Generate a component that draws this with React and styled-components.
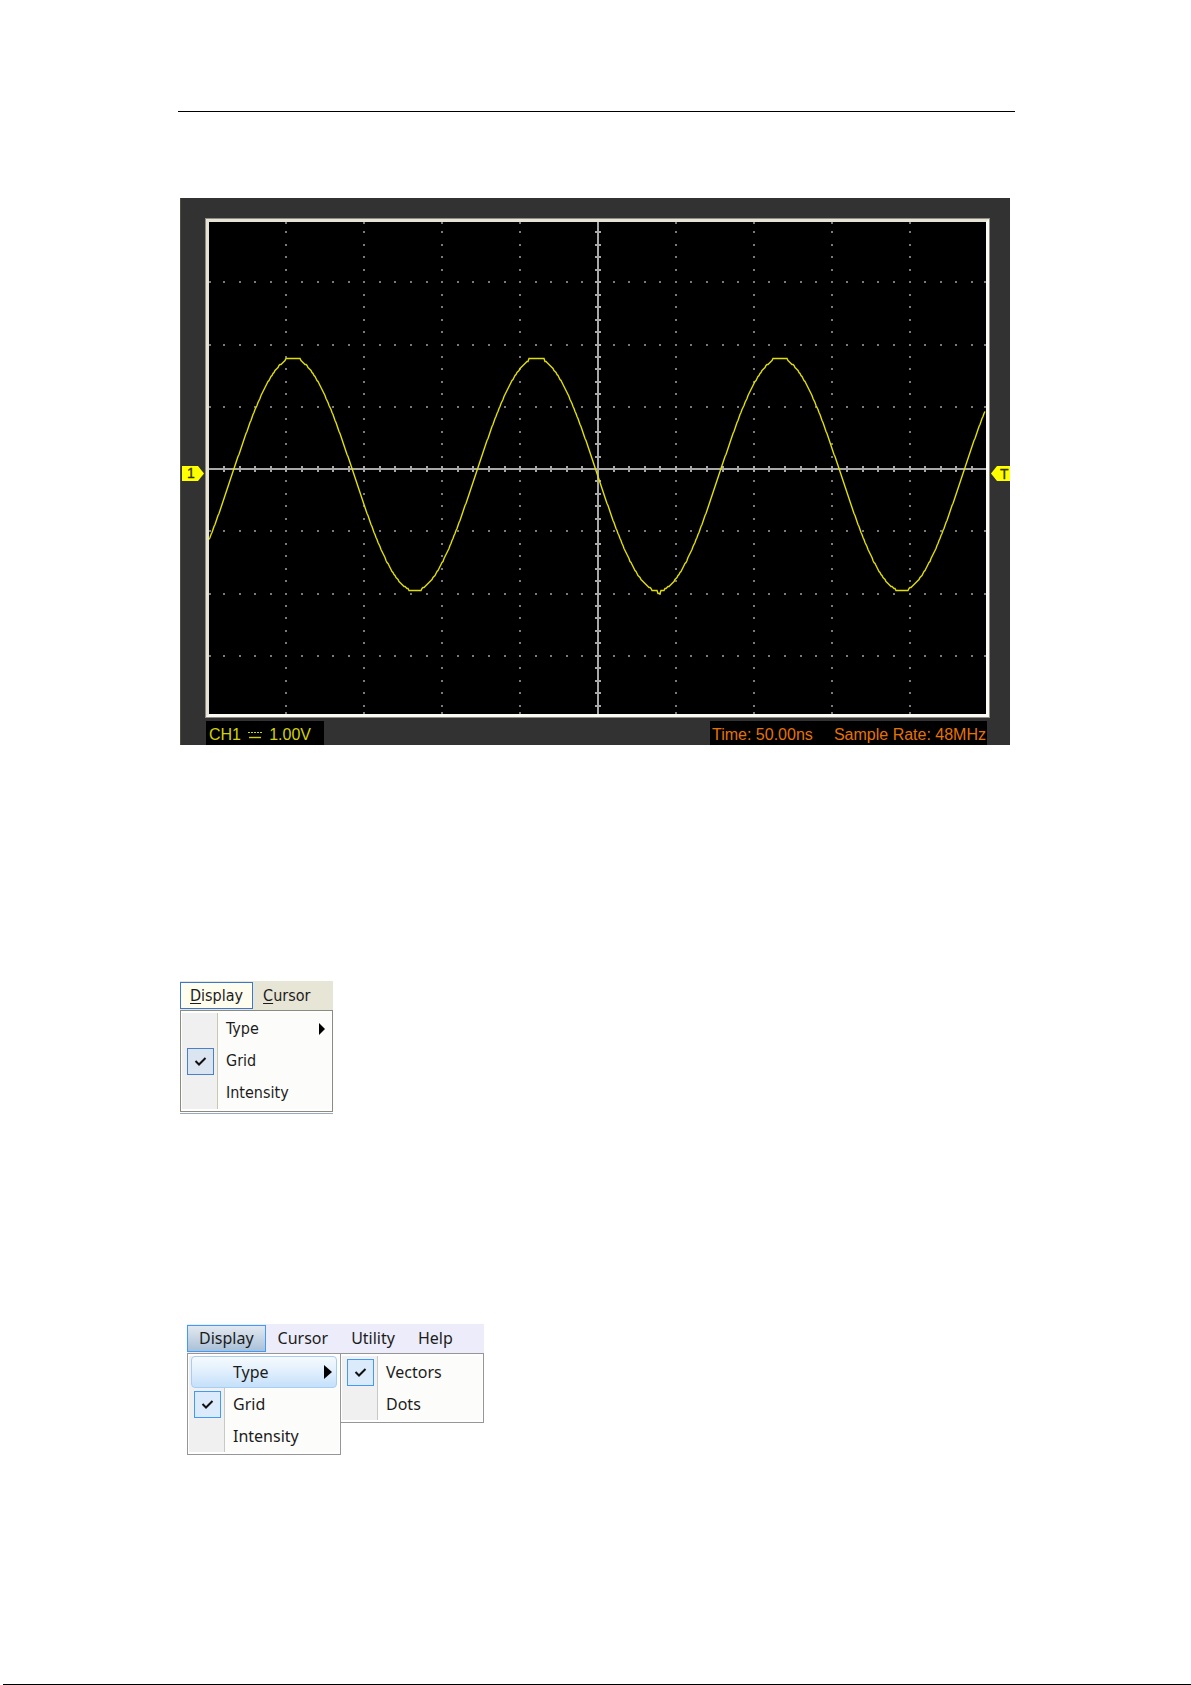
import React from 'react';
import styled, { createGlobalStyle, css } from 'styled-components';

const GlobalStyle = createGlobalStyle`
* {
  box-sizing: border-box;
}
body {
  margin: 0;
  background: #ffffff;
}
`;

const Page = styled.div`
display: flex;
flex-direction: column;
align-items: stretch;
min-height: 100vh;
`;

const Content = styled.main`
padding: 111px 176px 40px 178px;
`;

const Rule = styled.hr`
height: 1px;
margin: 0;
border: none;
background: #000000;
`;

const PageEdge = styled.div`
height: 1px;
margin-top: auto;
margin-left: 3px;
background: #000000;
`;

/* oscilloscope */

const Scope = styled.section`
display: grid;
grid-template-columns: 24px 1fr 20px;
margin: 86px 5px 0 2px;
padding-top: 20px;
background: #323232;
border-left: 1px solid #4a4d40;
`;

const Side = styled.div`
display: flex;
align-items: center;
justify-content: ${({ $end }) => ($end ? 'flex-end' : 'center')};
padding-top: 10px;
`;

const Frame = styled.div`
border: 4px solid;
border-color: #e6e2d6 #fbfaf6 #fbfaf6 #e6e2d6;
outline: 1px solid #8f8d84;
outline-offset: -1px;
background: #000000;
`;

const Plot = styled.svg`
display: block;
width: 100%;
height: auto;
`;

const MarkerText = styled.text`
font-family: "Liberation Sans", Arial, sans-serif;
font-size: 14px;
fill: #333300;
stroke: #333300;
stroke-width: 0.3px;
`;

const StatusBar = styled.div`
grid-column: 2;
display: flex;
justify-content: space-between;
padding: 3px 3px 0 1px;
`;

const Status = styled.div`
display: flex;
align-items: center;
justify-content: space-between;
width: ${({ $width }) => $width};
height: 24px;
padding: ${({ $pad }) => $pad};
background: #000000;
font-family: "Liberation Sans", Arial, sans-serif;
font-size: 16px;
line-height: 20px;
white-space: nowrap;
color: ${({ $color }) => $color};
`;

const WIDTH = 777;
const HEIGHT = 492;
const CENTER_X = 388;
const CENTER_Y = 247;
const STEP_X = 15.58;
const STEP_Y = 12.45;

const columns = Array.from({ length: 51 }, (_, i) => i - 25);
const rows = Array.from({ length: 41 }, (_, i) => i - 20);

const xAt = (i) => Math.min(WIDTH - 2, Math.max(0, Math.round(CENTER_X + i * STEP_X)));
const yAt = (i) => Math.min(HEIGHT - 1, Math.max(1, Math.round(CENTER_Y + i * STEP_Y)));

// dots run along every fifth row and every fifth column, the outer columns and rows stay empty
const hasDot = (c, r) => {
    if (c === 0 || r === 0) return false;
    const onColumn = c % 5 === 0 && Math.abs(c) < 25;
    const onRow = r % 5 === 0 && Math.abs(r) < 20;
    return onColumn || onRow;
};

const PERIOD = 243.5;
const FIRST_PEAK = 84;
const GLITCH_X = 450;

// the sampled signal goes flat for a few pixels round every peak
const waveY = (x) => {
    if (Math.abs(x - GLITCH_X) < 2) return 371;
    const phase = ((x - FIRST_PEAK) / PERIOD) * 2 * Math.PI;
    const c = Math.cos(phase);
    if (c > 0.98) return 136;
    if (c < -0.985) return 368;
    return Math.round(252 - 116 * c);
};

const wave = Array.from({ length: WIDTH }, (_, x) => `${x},${waveY(x) + 0.5}`).join(' ');

const Graticule = () => (
    <g shapeRendering="crispEdges">
        <g fill="#7a7a7a">
            {columns.map((c) =>
                rows
                    .filter((r) => hasDot(c, r))
                    .map((r) => <rect key={`${c}/${r}`} x={xAt(c)} y={yAt(r) - 1} width="2" height="2" />)
            )}
        </g>
        <g fill="#a8a8a8">
            <rect x="0" y={CENTER_Y - 1} width={WIDTH} height="2" />
            <rect x={CENTER_X} y="0" width="2" height={HEIGHT} />
            {columns.slice(1, -1).map((c) => (
                <rect key={c} x={xAt(c)} y={CENTER_Y - 3} width="2" height="6" />
            ))}
            {rows.slice(1, -1).map((r) => (
                <rect key={r} x={CENTER_X - 2} y={yAt(r) - 1} width="6" height="2" />
            ))}
        </g>
    </g>
);

const CouplingIcon = () => (
    <svg width="14" height="12" viewBox="0 0 14 12" fill="none" stroke="#d2d200" aria-hidden="true">
        <path d="M0 3.5h14" strokeDasharray="2 1" />
        <path d="M1 8.5h12" strokeWidth="1.4" />
    </svg>
);

const Oscilloscope = () => (
    <Scope>
        <Side>
            <svg width="22" height="15" viewBox="0 0 22 15">
                <path d="M0 0h16l6 7.5L16 15H0z" fill="#ffff00" />
                <MarkerText x="5" y="12">1</MarkerText>
            </svg>
        </Side>
        <Frame>
            <Plot viewBox={`0 0 ${WIDTH} ${HEIGHT}`} role="img" aria-label="CH1">
                <Graticule />
                <polyline points={wave} fill="none" stroke="#e0e000" strokeWidth="1.4" />
            </Plot>
        </Frame>
        <Side $end>
            <svg width="19" height="15" viewBox="0 0 19 15">
                <path d="M19 0H6L0 7.5 6 15h13z" fill="#ffff00" />
                <MarkerText x="9" y="13">T</MarkerText>
            </svg>
        </Side>
        <StatusBar>
            <Status $width="118px" $pad="4px 13px 0 3px" $color="#d2d200">
                <span>CH1</span>
                <CouplingIcon />
                <span>1.00V</span>
            </Status>
            <Status $width="277px" $pad="4px 1px 0 2px" $color="#e67300">
                <span>Time: 50.00ns</span>
                <span>Sample Rate: 48MHz</span>
            </Status>
        </StatusBar>
    </Scope>
);

/* menus */

const classic = css`
font-family: "DejaVu Sans Condensed", "DejaVu Sans", sans-serif;
--bar: #e6e5d6;
--active-border: #3b76cf;
--active-bg: #fffdee;
--menu-border: #8b8b80;
--separator: #c9c6b6;
--check-border: #4a80c8;
--check-bg: #dbe4f1;
`;

const aero = css`
font-family: "Noto Sans", "Open Sans", sans-serif;
--bar: #ececfa;
--active-border: #3f9bf5;
--active-bg: linear-gradient(#e3e9f0, #a9c0d8);
--menu-border: #969696;
--separator: #c8c8c8;
--check-border: #3f9bf5;
--check-bg: #dcebfb;
`;

const MenuBlock = styled.div`
width: ${({ $width }) => $width};
margin: ${({ $margin }) => $margin};
font-size: 16px;
color: #1c1c1c;
${({ $aero }) => ($aero ? aero : classic)}
`;

const MenuBar = styled.nav`
display: flex;
align-items: center;
column-gap: ${({ $gap }) => $gap};
height: 29px;
background: var(--bar);
`;

const BarButton = styled.button`
height: 27px;
padding: 0 ${({ $pad }) => $pad || '0px'};
border: ${({ $active }) => ($active ? '1px solid var(--active-border)' : 'none')};
background: ${({ $active }) => ($active ? 'var(--active-bg)' : 'none')};
font: inherit;
line-height: 25px;
color: inherit;

u {
  text-underline-offset: 2px;
}
`;

const Panels = styled.div`
display: flex;
align-items: flex-start;
`;

const Panel = styled.div`
flex: ${({ $grow }) => ($grow ? '1' : 'none')};
width: ${({ $width }) => $width};
margin-left: ${({ $grow }) => ($grow ? '-1px' : '0')};
padding: 2px 1px;
border: 1px solid var(--menu-border);
background: linear-gradient(90deg, #f0f0f0 36px, var(--separator) 36px 37px, #fcfcfb 37px);
background-clip: content-box;
background-color: #fcfcfb;
`;

const row = css`
display: grid;
grid-template-columns: 44px 1fr auto;
align-items: center;
width: 100%;
height: 32px;
padding: 0;
border: none;
background: none;
font: inherit;
line-height: 24px;
text-align: left;
color: inherit;
`;

const ItemButton = styled.button`
${row}
padding-right: 6px;
${({ $highlight }) => $highlight && css`
  width: calc(100% - 4px);
  margin: 0 2px;
  padding-right: 4px;
  grid-template-columns: 41px 1fr auto;
  border: 1px solid #a8cdf0;
  border-radius: 4px;
  background: linear-gradient(#f6fafe, #e2f0fd 45%, #c4e0fa);
`}
`;

const ItemLabel = styled.label`
${row}
`;

const ItemText = styled.span`
grid-column: 2;
`;

const CheckCell = styled.span`
display: grid;
width: 27px;
height: 27px;
margin-left: 5px;

> * {
  grid-area: 1 / 1;
}
svg {
  place-self: center;
  pointer-events: none;
}
`;

const CheckInput = styled.input`
appearance: none;
width: 27px;
height: 27px;
margin: 0;

&:checked {
  border: 1px solid var(--check-border);
  background: var(--check-bg);
}
`;

const Shadow = styled.div`
height: 1px;
margin-top: 1px;
background: #9aa9bd;
`;

const Tick = () => (
    <svg width="13" height="11" viewBox="0 0 13 11" fill="none" stroke="#111111" strokeWidth="2" aria-hidden="true">
        <path d="M1.5 5l3.5 3.5L11.5 2" />
    </svg>
);

const Arrow = ({ width, height }) => (
    <svg width={width} height={height} viewBox="0 0 6 12" preserveAspectRatio="none" fill="#000000" aria-hidden="true">
        <path d="M0 0l6 6-6 6z" />
    </svg>
);

const SubmenuItem = ({ label, highlight, arrow }) => (
    <ItemButton type="button" $highlight={highlight}>
        <ItemText>{label}</ItemText>
        {arrow && <Arrow width={arrow[0]} height={arrow[1]} />}
    </ItemButton>
);

const CheckItem = ({ id, label, type = 'checkbox', name, checked = false }) => (
    <ItemLabel htmlFor={id}>
        <CheckCell>
            <CheckInput id={id} type={type} name={name} defaultChecked={checked} />
            {checked && <Tick />}
        </CheckCell>
        <ItemText>{label}</ItemText>
    </ItemLabel>
);

const ClassicMenu = () => (
    <MenuBlock $width="153px" $margin="236px 0 0 2px">
        <MenuBar $gap="10px">
            <BarButton type="button" $active $pad="9px"><u>D</u>isplay</BarButton>
            <BarButton type="button"><u>C</u>ursor</BarButton>
        </MenuBar>
        <Panels>
            <Panel $width="153px">
                <SubmenuItem label="Type" arrow={[6, 12]} />
                <CheckItem id="classic-grid" label="Grid" checked />
                <SubmenuItem label="Intensity" />
            </Panel>
        </Panels>
        <Shadow />
    </MenuBlock>
);

const AeroMenu = () => (
    <MenuBlock $aero $width="297px" $margin="210px 0 0 9px">
        <MenuBar $gap="1px">
            <BarButton type="button" $active $pad="11px">Display</BarButton>
            <BarButton type="button" $pad="11px">Cursor</BarButton>
            <BarButton type="button" $pad="11px">Utility</BarButton>
            <BarButton type="button" $pad="11px">Help</BarButton>
        </MenuBar>
        <Panels>
            <Panel $width="154px">
                <SubmenuItem label="Type" highlight arrow={[8, 14]} />
                <CheckItem id="aero-grid" label="Grid" checked />
                <SubmenuItem label="Intensity" />
            </Panel>
            <Panel $grow>
                <CheckItem id="vectors" label="Vectors" type="radio" name="display-type" checked />
                <CheckItem id="dots" label="Dots" type="radio" name="display-type" />
            </Panel>
        </Panels>
    </MenuBlock>
);

const App = () => {
    return (
        <Page>
            <GlobalStyle />
            <Content>
                <Rule />
                <Oscilloscope />
                <ClassicMenu />
                <AeroMenu />
            </Content>
            <PageEdge />
        </Page>
    )
}

export default App
